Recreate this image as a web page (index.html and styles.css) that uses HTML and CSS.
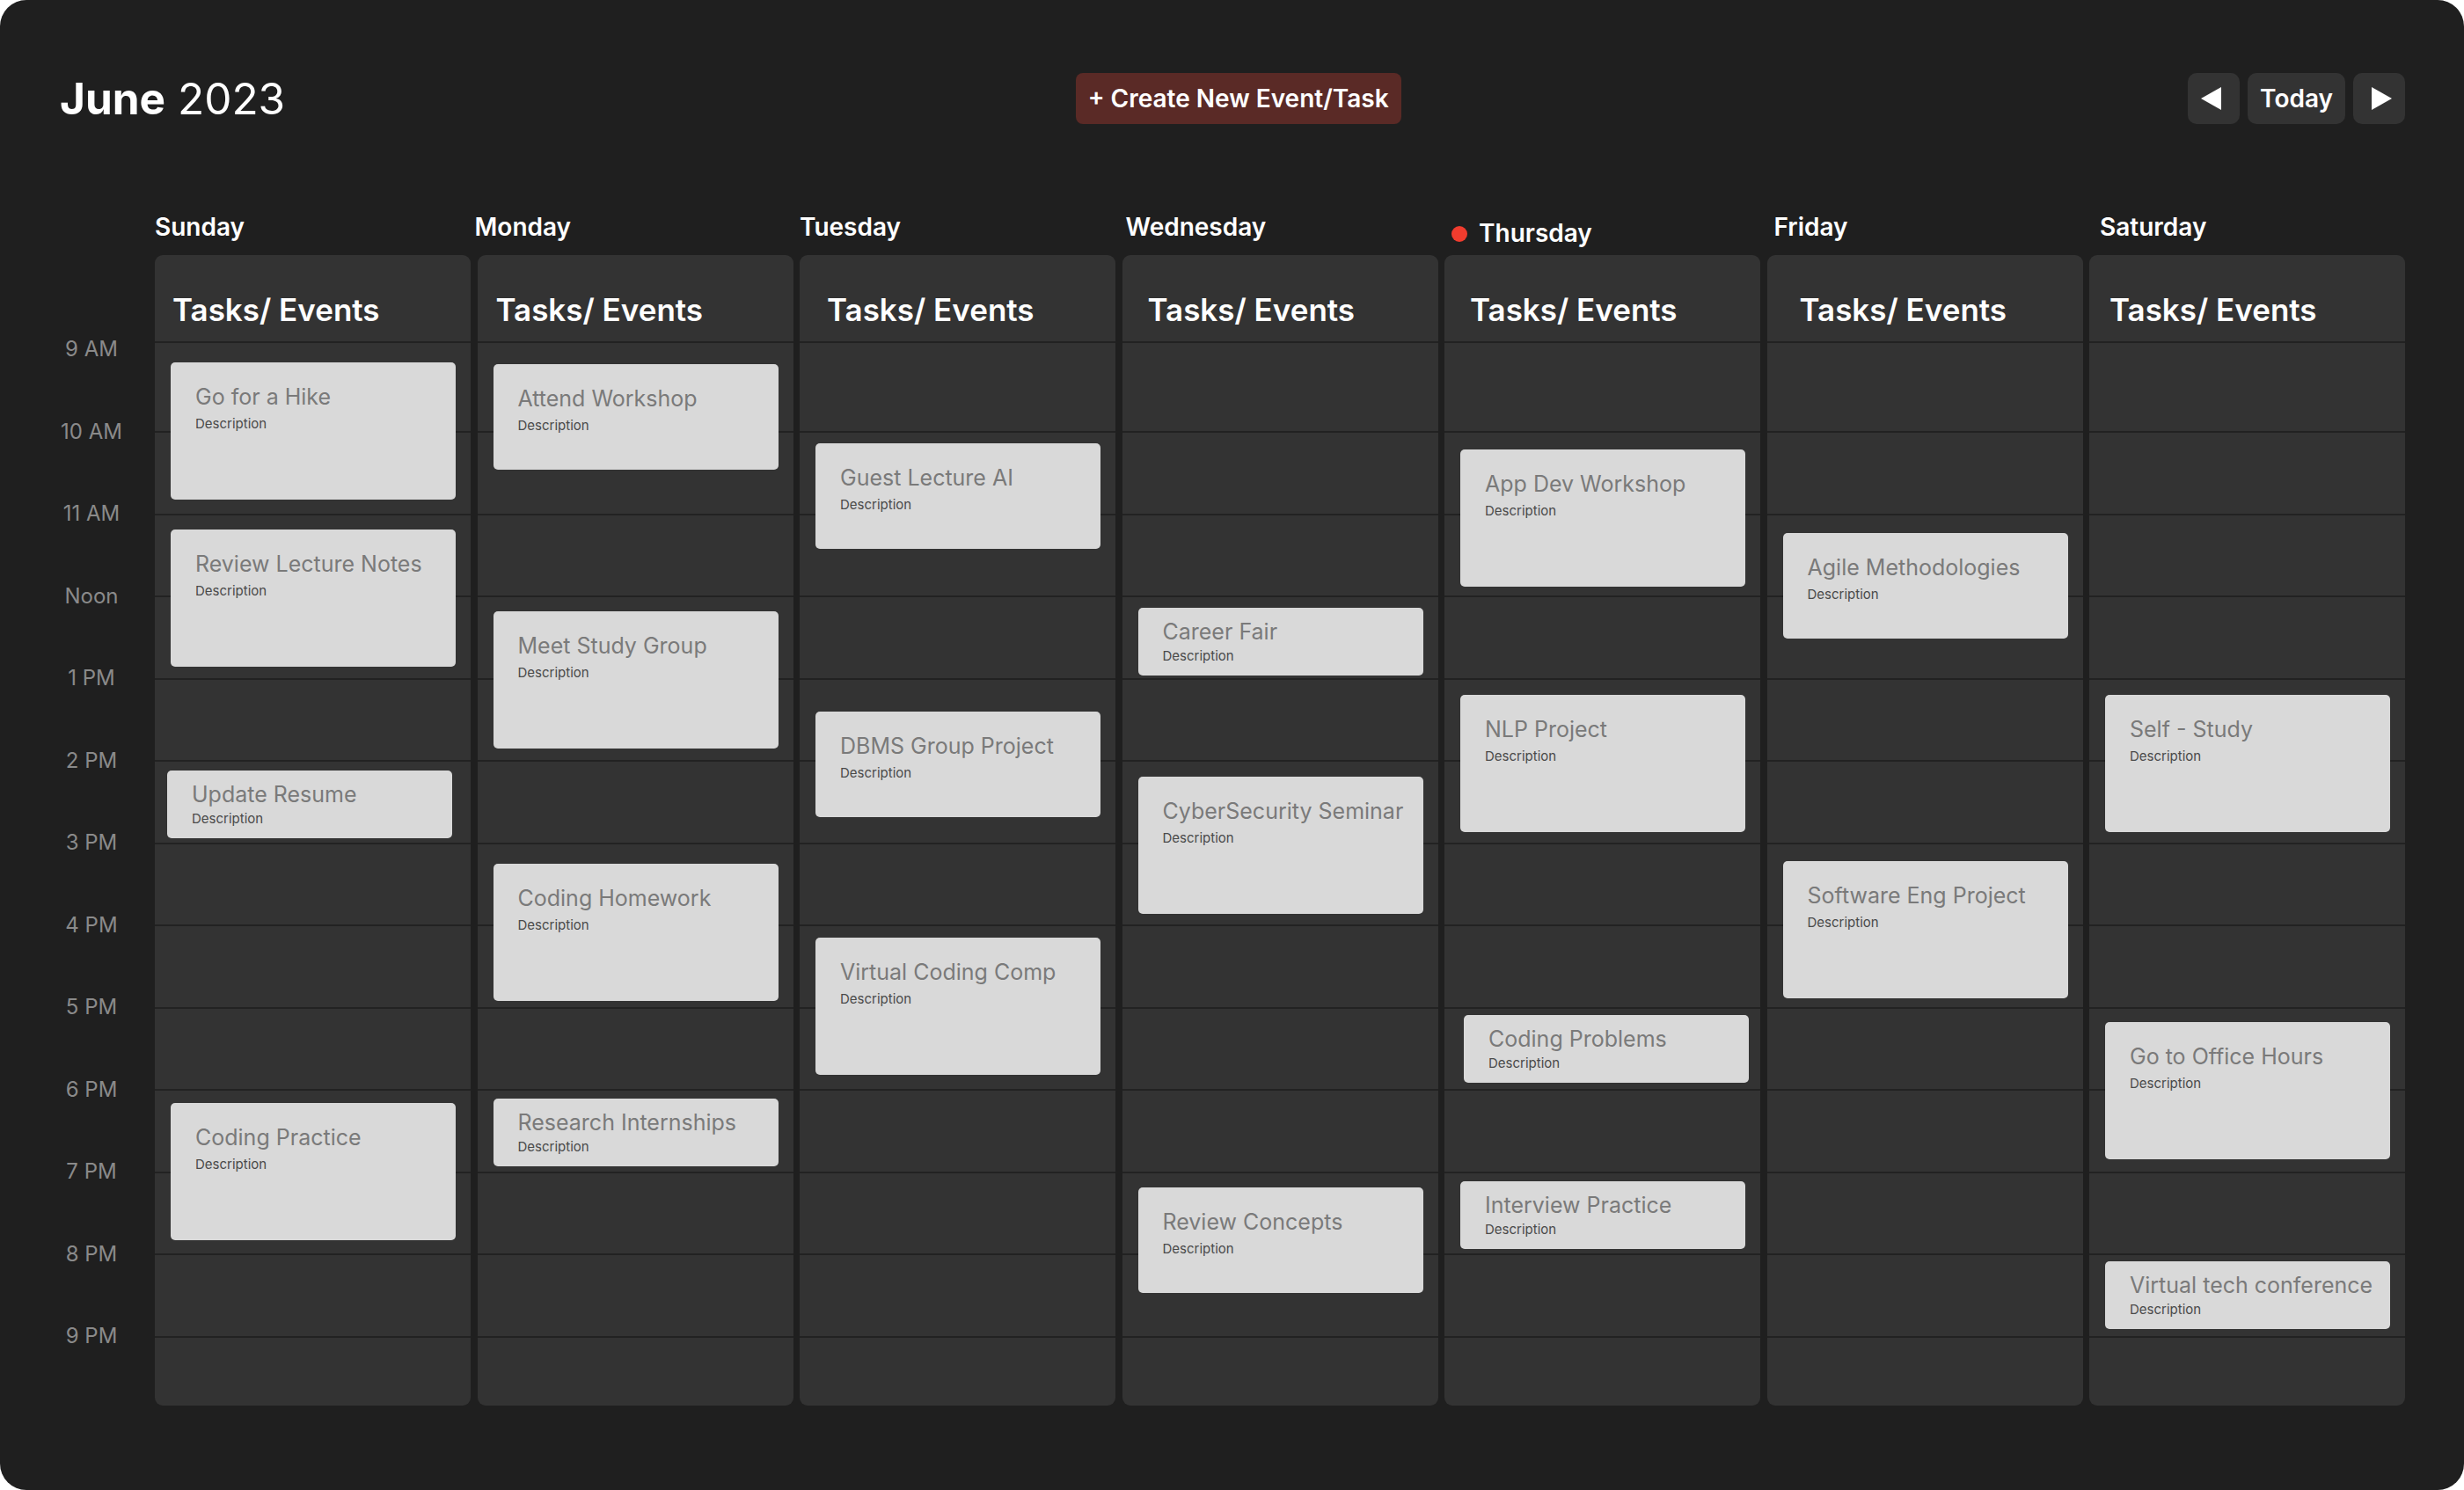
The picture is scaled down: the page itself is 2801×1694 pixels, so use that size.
FILE: index.html
```html
<!DOCTYPE html>
<html lang="en">
<head>
<meta charset="utf-8">
<title>June 2023 — Weekly Calendar</title>
<link rel="stylesheet" href="styles.css">
</head>
<body>
<div class="app">
  <header class="topbar">
    <h1 class="title"><span class="title-month">June</span> 2023</h1>
    <button class="create-btn">+ Create New Event/Task</button>
    <nav class="nav">
      <button class="nav-btn nav-btn--icon" aria-label="Previous week">
        <svg class="nav-arrow" width="24" height="26" viewBox="0 0 24 26"><polygon points="23,0 23,26 0,13" fill="#ffffff"/></svg>
      </button>
      <button class="nav-btn">Today</button>
      <button class="nav-btn nav-btn--icon" aria-label="Next week">
        <svg class="nav-arrow nav-arrow--next" width="24" height="26" viewBox="0 0 24 26"><polygon points="1,0 1,26 24,13" fill="#ffffff"/></svg>
      </button>
    </nav>
  </header>

  <main class="calendar">
    <div class="times">
      <div class="time">9 AM</div>
      <div class="time">10 AM</div>
      <div class="time">11 AM</div>
      <div class="time">Noon</div>
      <div class="time">1 PM</div>
      <div class="time">2 PM</div>
      <div class="time">3 PM</div>
      <div class="time">4 PM</div>
      <div class="time">5 PM</div>
      <div class="time">6 PM</div>
      <div class="time">7 PM</div>
      <div class="time">8 PM</div>
      <div class="time">9 PM</div>
    </div>

    <div class="week">
      <div class="day-labels">
        <div class="day-label">Sunday</div>
        <div class="day-label day-label--left5">Monday</div>
        <div class="day-label day-label--left4">Tuesday</div>
        <div class="day-label day-label--left2">Wednesday</div>
        <div class="day-label day-label--today"><span class="today-dot"></span>Thursday</div>
        <div class="day-label day-label--left2">Friday</div>
        <div class="day-label">Saturday</div>
      </div>

      <div class="days">
        <!-- Sunday -->
        <section class="day">
          <div class="day-head day-head--p20">Tasks/ Events</div>
          <div class="slot slot--first"></div><div class="slot"></div><div class="slot"></div><div class="slot"></div><div class="slot"></div><div class="slot"></div><div class="slot"></div><div class="slot"></div><div class="slot"></div><div class="slot"></div><div class="slot"></div><div class="slot"></div><div class="slot slot--last"></div>
          <article class="event event--tall" style="top:122px"><h3 class="event-title">Go for a Hike</h3><p class="event-desc">Description</p></article>
          <article class="event event--tall" style="top:312px"><h3 class="event-title">Review Lecture Notes</h3><p class="event-desc">Description</p></article>
          <article class="event event--short event--nudge-left" style="top:586px"><h3 class="event-title">Update Resume</h3><p class="event-desc">Description</p></article>
          <article class="event event--tall" style="top:964px"><h3 class="event-title">Coding Practice</h3><p class="event-desc">Description</p></article>
        </section>

        <!-- Monday -->
        <section class="day">
          <div class="day-head day-head--p21">Tasks/ Events</div>
          <div class="slot slot--first"></div><div class="slot"></div><div class="slot"></div><div class="slot"></div><div class="slot"></div><div class="slot"></div><div class="slot"></div><div class="slot"></div><div class="slot"></div><div class="slot"></div><div class="slot"></div><div class="slot"></div><div class="slot slot--last"></div>
          <article class="event event--medium" style="top:124px"><h3 class="event-title">Attend Workshop</h3><p class="event-desc">Description</p></article>
          <article class="event event--tall" style="top:405px"><h3 class="event-title">Meet Study Group</h3><p class="event-desc">Description</p></article>
          <article class="event event--tall" style="top:692px"><h3 class="event-title">Coding Homework</h3><p class="event-desc">Description</p></article>
          <article class="event event--short" style="top:959px"><h3 class="event-title">Research Internships</h3><p class="event-desc">Description</p></article>
        </section>

        <!-- Tuesday -->
        <section class="day">
          <div class="day-head day-head--p31">Tasks/ Events</div>
          <div class="slot slot--first"></div><div class="slot"></div><div class="slot"></div><div class="slot"></div><div class="slot"></div><div class="slot"></div><div class="slot"></div><div class="slot"></div><div class="slot"></div><div class="slot"></div><div class="slot"></div><div class="slot"></div><div class="slot slot--last"></div>
          <article class="event event--medium" style="top:214px"><h3 class="event-title">Guest Lecture AI</h3><p class="event-desc">Description</p></article>
          <article class="event event--medium" style="top:519px"><h3 class="event-title">DBMS Group Project</h3><p class="event-desc">Description</p></article>
          <article class="event event--tall" style="top:776px"><h3 class="event-title">Virtual Coding Comp</h3><p class="event-desc">Description</p></article>
        </section>

        <!-- Wednesday -->
        <section class="day">
          <div class="day-head day-head--p29">Tasks/ Events</div>
          <div class="slot slot--first"></div><div class="slot"></div><div class="slot"></div><div class="slot"></div><div class="slot"></div><div class="slot"></div><div class="slot"></div><div class="slot"></div><div class="slot"></div><div class="slot"></div><div class="slot"></div><div class="slot"></div><div class="slot slot--last"></div>
          <article class="event event--short" style="top:401px"><h3 class="event-title">Career Fair</h3><p class="event-desc">Description</p></article>
          <article class="event event--tall" style="top:593px"><h3 class="event-title">CyberSecurity Seminar</h3><p class="event-desc">Description</p></article>
          <article class="event event--medium" style="top:1060px"><h3 class="event-title">Review Concepts</h3><p class="event-desc">Description</p></article>
        </section>

        <!-- Thursday -->
        <section class="day">
          <div class="day-head day-head--p29">Tasks/ Events</div>
          <div class="slot slot--first"></div><div class="slot"></div><div class="slot"></div><div class="slot"></div><div class="slot"></div><div class="slot"></div><div class="slot"></div><div class="slot"></div><div class="slot"></div><div class="slot"></div><div class="slot"></div><div class="slot"></div><div class="slot slot--last"></div>
          <article class="event event--tall" style="top:221px"><h3 class="event-title">App Dev Workshop</h3><p class="event-desc">Description</p></article>
          <article class="event event--tall" style="top:500px"><h3 class="event-title">NLP Project</h3><p class="event-desc">Description</p></article>
          <article class="event event--short event--nudge-right" style="top:864px"><h3 class="event-title">Coding Problems</h3><p class="event-desc">Description</p></article>
          <article class="event event--short" style="top:1053px"><h3 class="event-title">Interview Practice</h3><p class="event-desc">Description</p></article>
        </section>

        <!-- Friday -->
        <section class="day">
          <div class="day-head day-head--p37">Tasks/ Events</div>
          <div class="slot slot--first"></div><div class="slot"></div><div class="slot"></div><div class="slot"></div><div class="slot"></div><div class="slot"></div><div class="slot"></div><div class="slot"></div><div class="slot"></div><div class="slot"></div><div class="slot"></div><div class="slot"></div><div class="slot slot--last"></div>
          <article class="event event--medium" style="top:316px"><h3 class="event-title">Agile Methodologies</h3><p class="event-desc">Description</p></article>
          <article class="event event--tall" style="top:689px"><h3 class="event-title">Software Eng Project</h3><p class="event-desc">Description</p></article>
        </section>

        <!-- Saturday -->
        <section class="day">
          <div class="day-head day-head--p23">Tasks/ Events</div>
          <div class="slot slot--first"></div><div class="slot"></div><div class="slot"></div><div class="slot"></div><div class="slot"></div><div class="slot"></div><div class="slot"></div><div class="slot"></div><div class="slot"></div><div class="slot"></div><div class="slot"></div><div class="slot"></div><div class="slot slot--last"></div>
          <article class="event event--tall" style="top:500px"><h3 class="event-title">Self - Study</h3><p class="event-desc">Description</p></article>
          <article class="event event--tall" style="top:872px"><h3 class="event-title">Go to Office Hours</h3><p class="event-desc">Description</p></article>
          <article class="event event--short" style="top:1144px"><h3 class="event-title">Virtual tech conference</h3><p class="event-desc">Description</p></article>
        </section>
      </div>
    </div>
  </main>
</div>
</body>
</html>
```

FILE: styles.css
```css
* {
  box-sizing: border-box;
}

html, body {
  margin: 0;
  padding: 0;
  background: #ffffff;
}

body {
  font-family: Inter, "Noto Sans", "Liberation Sans", sans-serif;
  color: #ffffff;
}

.app {
  width: 2801px;
  height: 1694px;
  background: #1f1f1f;
  border-radius: 30px;
  padding: 83px 67px 0 68px;
  overflow: hidden;
}

/* ---------- top bar ---------- */
.topbar {
  display: flex;
  align-items: center;
  justify-content: space-between;
  height: 58px;
}

.title {
  margin: 0;
  font-size: 49.5px;
  line-height: 60px;
  font-weight: 400;
  color: #ffffff;
  letter-spacing: 0;
}

.title-month {
  font-weight: 700;
}

.create-btn {
  height: 58px;
  padding: 0 14px;
  border: none;
  border-radius: 8px;
  background: #5a2a26;
  color: #ffffff;
  font-family: inherit;
  font-size: 28px;
  font-weight: 600;
  line-height: 34px;
  margin-left: 4px;
}

.nav {
  display: flex;
  gap: 9px;
}

.nav-btn {
  height: 58px;
  min-width: 59px;
  padding: 0 14px;
  border: none;
  border-radius: 10px;
  background: #333333;
  color: #ffffff;
  font-family: inherit;
  font-size: 28px;
  font-weight: 600;
  line-height: 34px;
  display: flex;
  align-items: center;
  justify-content: center;
}

.nav-btn--icon {
  width: 59px;
  padding: 0;
}

.nav-arrow {
  display: block;
  margin-left: -6px;
}

.nav-arrow--next {
  margin-left: 6px;
}

/* ---------- calendar ---------- */
.calendar {
  display: flex;
  gap: 36px;
  margin-top: 93px;
}

.times {
  width: 72px;
  flex: none;
  padding-top: 115.75px;
}

.time {
  height: 93.5px;
  display: flex;
  align-items: center;
  justify-content: center;
  white-space: nowrap;
  font-size: 24px;
  line-height: 29px;
  color: #8a8a8a;
}

.week {
  flex: 1;
  min-width: 0;
}

.day-labels {
  display: grid;
  grid-template-columns: repeat(7, 1fr);
  column-gap: 9.5px;
  margin-right: -12px;
  height: 34px;
}

.day-label {
  display: flex;
  align-items: center;
  font-size: 28px;
  line-height: 34px;
  font-weight: 600;
  color: #ffffff;
}

.day-label--left5 { margin-left: -5px; }
.day-label--left4 { margin-left: -4px; }
.day-label--left2 { margin-left: -2px; }

.day-label--today {
  padding-top: 14px;
}

.today-dot {
  width: 18px;
  height: 18px;
  border-radius: 50%;
  background: #f03c2e;
  margin-right: 13px;
  margin-top: 2px;
  flex: none;
}

.days {
  display: grid;
  grid-template-columns: repeat(7, 1fr);
  column-gap: 7.5px;
  margin-top: 22px;
}

.day {
  position: relative;
  height: 1308px;
  background: #333333;
  border-radius: 9px;
  display: flex;
  flex-direction: column;
  overflow: hidden;
}

.day-head {
  height: 98px;
  flex: none;
  padding-top: 41px;
  font-size: 35px;
  line-height: 42px;
  font-weight: 600;
  color: #ffffff;
  white-space: nowrap;
}

.day-head--p20 { padding-left: 20px; }
.day-head--p21 { padding-left: 21px; }
.day-head--p23 { padding-left: 23px; }
.day-head--p29 { padding-left: 29px; }
.day-head--p31 { padding-left: 31px; }
.day-head--p37 { padding-left: 37px; }

.slot {
  flex: none;
  height: 93.5px;
  border-top: 2px solid #222222;
}

.slot--first {
  height: 102px;
}

.slot--last {
  flex: 1;
  height: auto;
}

/* ---------- events ---------- */
.event {
  position: absolute;
  left: 18px;
  width: 324px;
  background: #d9d9d9;
  border-radius: 5px;
  padding: 24px 12px 0 28px;
  overflow: hidden;
}

.event--nudge-left { left: 14px; }
.event--nudge-right { left: 22px; }

.event--tall { height: 156px; }
.event--medium { height: 120px; }
.event--short {
  height: 77px;
  padding-top: 12px;
}

.event-title {
  margin: 0;
  font-size: 25px;
  line-height: 30px;
  font-weight: 400;
  color: #7a7a7a;
  white-space: nowrap;
}

.event-desc {
  margin: 6.5px 0 0;
  font-size: 15px;
  line-height: 18px;
  font-weight: 400;
  color: #4a4a4a;
}

.event--short .event-desc {
  margin-top: 3.5px;
}
```
